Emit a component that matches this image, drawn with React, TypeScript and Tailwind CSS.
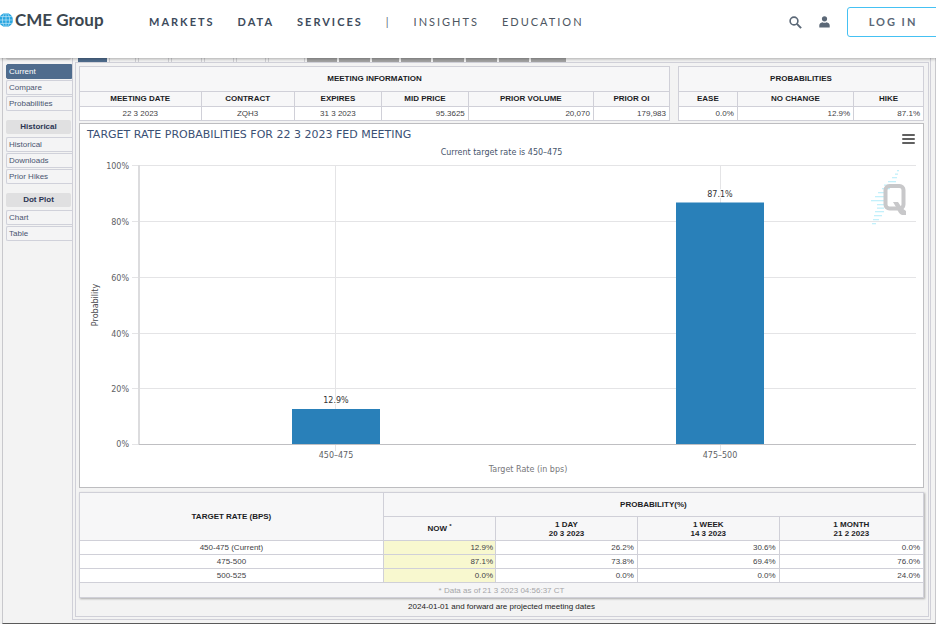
import React from "react";

const sans = "font-['Liberation_Sans',Arial,sans-serif]";

const primaryLinks = ["MARKETS", "DATA", "SERVICES"];
const secondaryLinks = ["INSIGHTS", "EDUCATION"];

function GlobeLogo() {
  return (
    <svg viewBox="0 0 14 14" className="h-[14px] w-[14px] shrink-0" aria-hidden="true">
      <circle cx="7" cy="7" r="7" fill="#27a5e0" />
      <g fill="none" stroke="#d4eefa" strokeWidth="0.6">
        <path d="M7 0v14M0 7h14M1.2 3.6h11.6M1.2 10.4h11.6" />
        <ellipse cx="7" cy="7" rx="3.6" ry="7" />
      </g>
    </svg>
  );
}

function Header() {
  return (
    <header className="relative z-10 flex h-[58px] items-start overflow-x-clip bg-white font-[Lato,sans-serif] text-[#3d4b5c] shadow-[0_1px_3px_rgba(0,0,0,0.3)]">
      <a href="#" className="-ml-px mt-[8px] flex w-[150px] shrink-0 items-center gap-[2px] text-[17px] leading-[23px] font-bold text-[#3c4750]">
        <GlobeLogo />
        <span>CME Group</span>
      </a>
      <nav className="mt-[14px] flex items-center gap-[23px] text-[11px] leading-4 tracking-[2px]">
        {primaryLinks.map((l) => (
          <a key={l} href="#" className="font-bold">{l}</a>
        ))}
        <span className="text-[#5f6a75]">|</span>
        {secondaryLinks.map((l) => (
          <a key={l} href="#" className="text-[#4d5661]">{l}</a>
        ))}
      </nav>
      <div className="-mr-[3px] ml-auto flex shrink-0 items-center pt-[7px]">
        <button type="button" aria-label="Search" className="mr-[17px]">
          <svg viewBox="0 0 13 13" className="h-[13px] w-[13px]" fill="none" stroke="#5b6877" strokeWidth="1.6">
            <circle cx="5" cy="5" r="3.9" />
            <path d="M7.9 7.9l4.2 4.2" strokeWidth="2" />
          </svg>
        </button>
        <button type="button" aria-label="Account" className="mr-[17px]">
          <svg viewBox="0 0 11 12" className="h-[12px] w-[11px]" fill="#5b6877">
            <circle cx="5.5" cy="2.8" r="2.6" />
            <path d="M0.3 11.5V9.2C0.3 7.6 1.8 6.6 3.4 6.2c1 .8 3.2.8 4.2 0 1.6.4 3.1 1.4 3.1 3v2.3z" />
          </svg>
        </button>
        <button type="button" className="h-[30px] w-[92px] rounded-[3px] border border-[#45c1f3] text-[11px] leading-4 font-bold tracking-[2px] text-[#5b6877]">
          LOG IN
        </button>
      </div>
    </header>
  );
}

function SideItem({ label, active = false }: { label: string; active?: boolean }) {
  return (
    <a
      href="#"
      className={
        active
          ? "block h-[15px] rounded-l-[2px] border border-[#4f6c8d] bg-[#4f6c8d] pl-[2px] leading-[13px] text-white"
          : "block h-[15px] rounded-l-[2px] border border-r-0 border-[#d0d1da] bg-[#f4f4f5] pl-[2px] leading-[13px] text-[#4a5470]"
      }
    >
      {label}
    </a>
  );
}

function SideHeading({ label }: { label: string }) {
  return (
    <h2 className="mt-[8px] mr-px mb-[2px] h-[14px] rounded-[2px] bg-[#e0e0e1] text-center leading-[14px] font-bold text-[#2b3554]">
      {label}
    </h2>
  );
}

function Sidebar() {
  return (
    <aside className="flex w-[69px] shrink-0 flex-col gap-px pl-[3px] text-[8px]">
      <div className="mr-px mb-[3px] h-[2px] rounded-b-[2px] bg-[#d8d8d9]" />
      <SideItem label="Current" active />
      <SideItem label="Compare" />
      <SideItem label="Probabilities" />
      <SideHeading label="Historical" />
      <SideItem label="Historical" />
      <SideItem label="Downloads" />
      <SideItem label="Prior Hikes" />
      <SideHeading label="Dot Plot" />
      <SideItem label="Chart" />
      <SideItem label="Table" />
    </aside>
  );
}

const openTabs = ["w-[27px]", "w-[31px]", "w-[31px]", "w-[30px]", "w-[30px]", "w-[37px]"];
const projectedTabs = ["w-[30px]", "w-[31px]", "w-[27px]", "w-[30px]", "w-[31px]", "w-[31px]", "w-[30px]", "w-[35px]"];

function Tabs() {
  return (
    <div className="flex h-[4px] gap-[2px] pl-[3px]">
      <div className="w-[29px] bg-[#4f6c8d]" />
      {openTabs.map((w, i) => (
        <div key={i} className={`${w} border-x border-[#d0d0d4]`} />
      ))}
      {projectedTabs.map((w, i) => (
        <div key={i} className={`${w} bg-[#a3a3a3]`} />
      ))}
    </div>
  );
}

type Col = { head: string; value: string; width: string; center?: boolean };

const meetingCols: Col[] = [
  { head: "MEETING DATE", value: "22 3 2023", width: "w-[20.6%]", center: true },
  { head: "CONTRACT", value: "ZQH3", width: "w-[15.8%]", center: true },
  { head: "EXPIRES", value: "31 3 2023", width: "w-[14.8%]", center: true },
  { head: "MID PRICE", value: "95.3625", width: "w-[14.7%]" },
  { head: "PRIOR VOLUME", value: "20,070", width: "w-[21.2%]" },
  { head: "PRIOR OI", value: "179,983", width: "w-[12.9%]" },
];

const probCols: Col[] = [
  { head: "EASE", value: "0.0%", width: "w-[24%]" },
  { head: "NO CHANGE", value: "12.9%", width: "w-[47.5%]" },
  { head: "HIKE", value: "87.1%", width: "w-[28.5%]" },
];

const cell = "border border-[#d0d0d8] p-0";

function InfoTable({ title, cols }: { title: string; cols: Col[] }) {
  return (
    <table className="w-full table-fixed border-collapse bg-white text-[8px] leading-[10px] text-[#3f3f46]">
      <colgroup>
        {cols.map((c) => (
          <col key={c.head} className={c.width} />
        ))}
      </colgroup>
      <thead className="bg-[#f7f7f8] text-[#1c1c1f]">
        <tr className="h-[25px]">
          <th colSpan={cols.length} className={cell}>{title}</th>
        </tr>
        <tr className="h-[15px]">
          {cols.map((c) => (
            <th key={c.head} className={cell}>{c.head}</th>
          ))}
        </tr>
      </thead>
      <tbody>
        <tr className="h-[14px]">
          {cols.map((c) => (
            <td key={c.head} className={c.center ? `${cell} text-center` : `${cell} pr-[3px] text-right`}>
              {c.value}
            </td>
          ))}
        </tr>
      </tbody>
    </table>
  );
}

const ticks = [
  { label: "100%", y: 17.5 },
  { label: "80%", y: 73.5 },
  { label: "60%", y: 129.5 },
  { label: "40%", y: 185.5 },
  { label: "20%", y: 240.5 },
];

const bars = [
  { label: "450–475", value: "12.9%", x: 212, top: 261 },
  { label: "475–500", value: "87.1%", x: 596, top: 54.5 },
];

const streaks = [
  [817, 26, 2], [815, 29.5, 3], [812, 33, 5], [808, 37, 8], [804, 40.5, 8], [802, 44, 8], [798, 48, 8], [795, 52, 9],
  [791, 56, 13], [797, 60, 7], [797, 63.5, 7], [795, 67, 9], [794, 71, 8], [793, 75, 6], [792, 79, 4],
];

function Chart() {
  return (
    <section className="mt-[2px] border border-[#bdbdc0] bg-white font-['DejaVu_Sans',sans-serif]">
      <div className="flex h-[24px] items-start justify-between pr-[8px] pl-[7px]">
        <h1 className="pt-[2px] text-[11px] leading-[18px] text-[#3a5075]">
          TARGET RATE PROBABILITIES FOR 22 3 2023 FED MEETING
        </h1>
        <button type="button" aria-label="Chart menu" className="mt-[10px] flex w-[13px] flex-col gap-[2px]">
          <span className="h-[2px] w-full rounded-full bg-[#606060]" />
          <span className="h-[2px] w-full rounded-full bg-[#606060]" />
          <span className="h-[2px] w-full rounded-full bg-[#606060]" />
        </button>
      </div>
      <svg viewBox="0 0 843 339" className="block h-auto w-full" fontSize="8" fill="#606165">
        <text x="421.5" y="7" textAnchor="middle" fill="#46546b">Current target rate is 450–475</text>
        <g stroke="#e4e4e6" strokeWidth="1">
          {ticks.map((t) => (
            <path key={t.label} d={`M52 ${t.y}H836`} />
          ))}
          <path d="M52 296.5H59M255.5 17V303M640.5 17V303" />
        </g>
        <path d="M59 17V297" stroke="#dcdcde" strokeWidth="2" />
        {ticks.map((t) => (
          <text key={t.label} x="49" y={t.y + 3} textAnchor="end">{t.label}</text>
        ))}
        <text x="49" y="299" textAnchor="end">0%</text>
        <g>
          {streaks.map(([x, y, w]) => (
            <rect key={y} x={x} y={y - 4} width={w} height="1.3" fill="#c3f0fb" />
          ))}
          <rect x="805.5" y="38" width="18" height="22.5" rx="4" fill="none" stroke="#c8c8ca" strokeWidth="4" />
          <path d="M813 54h5l4 6 4 3v4h-4c-3-1-4-4-6-8z" fill="#c8c8ca" />
        </g>
        {bars.map((b) => (
          <g key={b.label}>
            <rect x={b.x} y={b.top} width="88" height={296 - b.top} fill="#2980b9" />
            <text x={b.x + 44} y={b.top - 6} textAnchor="middle" fill="#333333" stroke="#ffffff" strokeWidth="2" paintOrder="stroke">
              {b.value}
            </text>
            <text x={b.x + 44} y="310" textAnchor="middle">{b.label}</text>
          </g>
        ))}
        <path d="M59 296.5H836" stroke="#bfbfc2" />
        <text x="448" y="324" textAnchor="middle" fill="#77777a">Target Rate (in bps)</text>
        <text transform="translate(18 157) rotate(-90)" textAnchor="middle" fill="#4a4a4e">Probability</text>
      </svg>
    </section>
  );
}

const periods = [
  { top: "1 DAY", date: "20 3 2023" },
  { top: "1 WEEK", date: "14 3 2023" },
  { top: "1 MONTH", date: "21 2 2023" },
];

const rates = [
  { rate: "450-475 (Current)", now: "12.9%", past: ["26.2%", "30.6%", "0.0%"] },
  { rate: "475-500", now: "87.1%", past: ["73.8%", "69.4%", "76.0%"] },
  { rate: "500-525", now: "0.0%", past: ["0.0%", "0.0%", "24.0%"] },
];

function RateTable() {
  return (
    <table className="mt-[4px] w-full table-fixed border-collapse bg-white text-[8px] leading-[9px] text-[#3f3f46] shadow-[1px_1px_2px_rgba(0,0,0,0.3)]">
      <colgroup>
        <col className="w-[36%]" />
        <col className="w-[13.3%]" />
        <col className="w-[16.8%]" />
        <col className="w-[16.8%]" />
        <col className="w-[17.1%]" />
      </colgroup>
      <thead className="bg-[#f7f7f8] text-[#1c1c1f]">
        <tr className="h-[24px]">
          <th rowSpan={2} className={cell}>TARGET RATE (BPS)</th>
          <th colSpan={4} className={cell}>PROBABILITY(%)</th>
        </tr>
        <tr className="h-[24px]">
          <th className={cell}>NOW <sup>*</sup></th>
          {periods.map((p) => (
            <th key={p.top} className={cell}>
              {p.top}
              <br />
              {p.date}
            </th>
          ))}
        </tr>
      </thead>
      <tbody>
        {rates.map((r) => (
          <tr key={r.rate} className="h-[14px]">
            <td className={`${cell} text-center`}>{r.rate}</td>
            <td className={`${cell} bg-[#f8f8cf] pr-[2px] text-right`}>{r.now}</td>
            {r.past.map((v, i) => (
              <td key={i} className={`${cell} pr-[3px] text-right`}>{v}</td>
            ))}
          </tr>
        ))}
        <tr className="h-[15px] bg-[#f5f5f6]">
          <td colSpan={5} className={`${cell} text-center text-[#a5a5a8]`}>* Data as of 21 3 2023 04:56:37 CT</td>
        </tr>
      </tbody>
    </table>
  );
}

export default function App() {
  return (
    <div className={`bg-[#f2f2f2] ${sans}`}>
      <Header />
      <div className="ml-[2px] flex border-r border-b border-l border-r-[#c8c8cc] border-b-[#5a5a5a] border-l-[#c8c8cc] bg-[#f3f3f3]">
        <Sidebar />
        <main className="mr-[4px] mb-[3px] min-w-0 flex-1 border-r border-b border-l border-[#d0d0d8] pr-px pb-[2px] pl-[2px]">
          <Tabs />
          <div className="border border-[#d0d0d8] pt-[3px] pr-[4px] pl-[3px]">
            <div className="flex gap-[8px]">
              <div className="min-w-0 flex-[591]">
                <InfoTable title="MEETING INFORMATION" cols={meetingCols} />
              </div>
              <div className="min-w-0 flex-[246]">
                <InfoTable title="PROBABILITIES" cols={probCols} />
              </div>
            </div>
            <Chart />
            <RateTable />
            <p className="h-[18px] text-center text-[8px] leading-[18px] text-[#222222]">
              2024-01-01 and forward are projected meeting dates
            </p>
          </div>
        </main>
      </div>
    </div>
  );
}
